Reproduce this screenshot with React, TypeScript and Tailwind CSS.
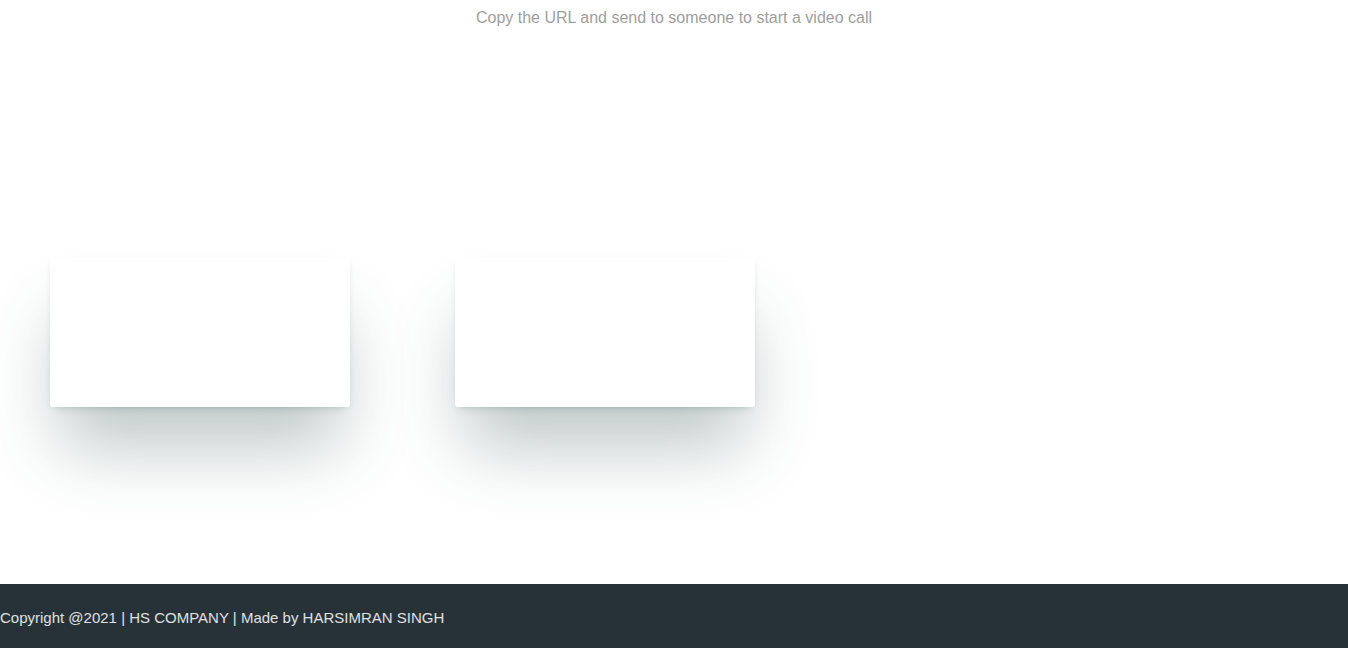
import React from "react";

const App: React.FC = () => {
  return (
    <div className="min-h-screen bg-white font-['Liberation_Sans',Arial,sans-serif] flex flex-col">
      {/* HINT */}
      <p className="text-center text-[16px] leading-[34px] pt-[1px] text-[#9e9e9e]">
        Copy the URL and send to someone to start a video call
      </p>

      {/* VIDEO BOXES */}
      <div className="flex-1 flex items-start gap-[105px] pl-[50px] pt-[222px]">
        <div className="w-[300px] h-[150px] bg-white rounded-[3px] shadow-[0_50px_70px_-10px_rgba(55,85,85,0.32),0_4px_8px_-4px_rgba(55,85,85,0.3)]" />
        <div className="w-[300px] h-[150px] bg-white rounded-[3px] shadow-[0_50px_70px_-10px_rgba(55,85,85,0.32),0_4px_8px_-4px_rgba(55,85,85,0.3)]" />
      </div>

      {/* FOOTER */}
      <footer className="h-[64px] bg-[#263238] flex items-center pt-[4px]">
        <span className="text-[15px] text-white/85">
          Copyright @2021 | HS COMPANY | Made by HARSIMRAN SINGH
        </span>
      </footer>
    </div>
  );
};

export default App;
